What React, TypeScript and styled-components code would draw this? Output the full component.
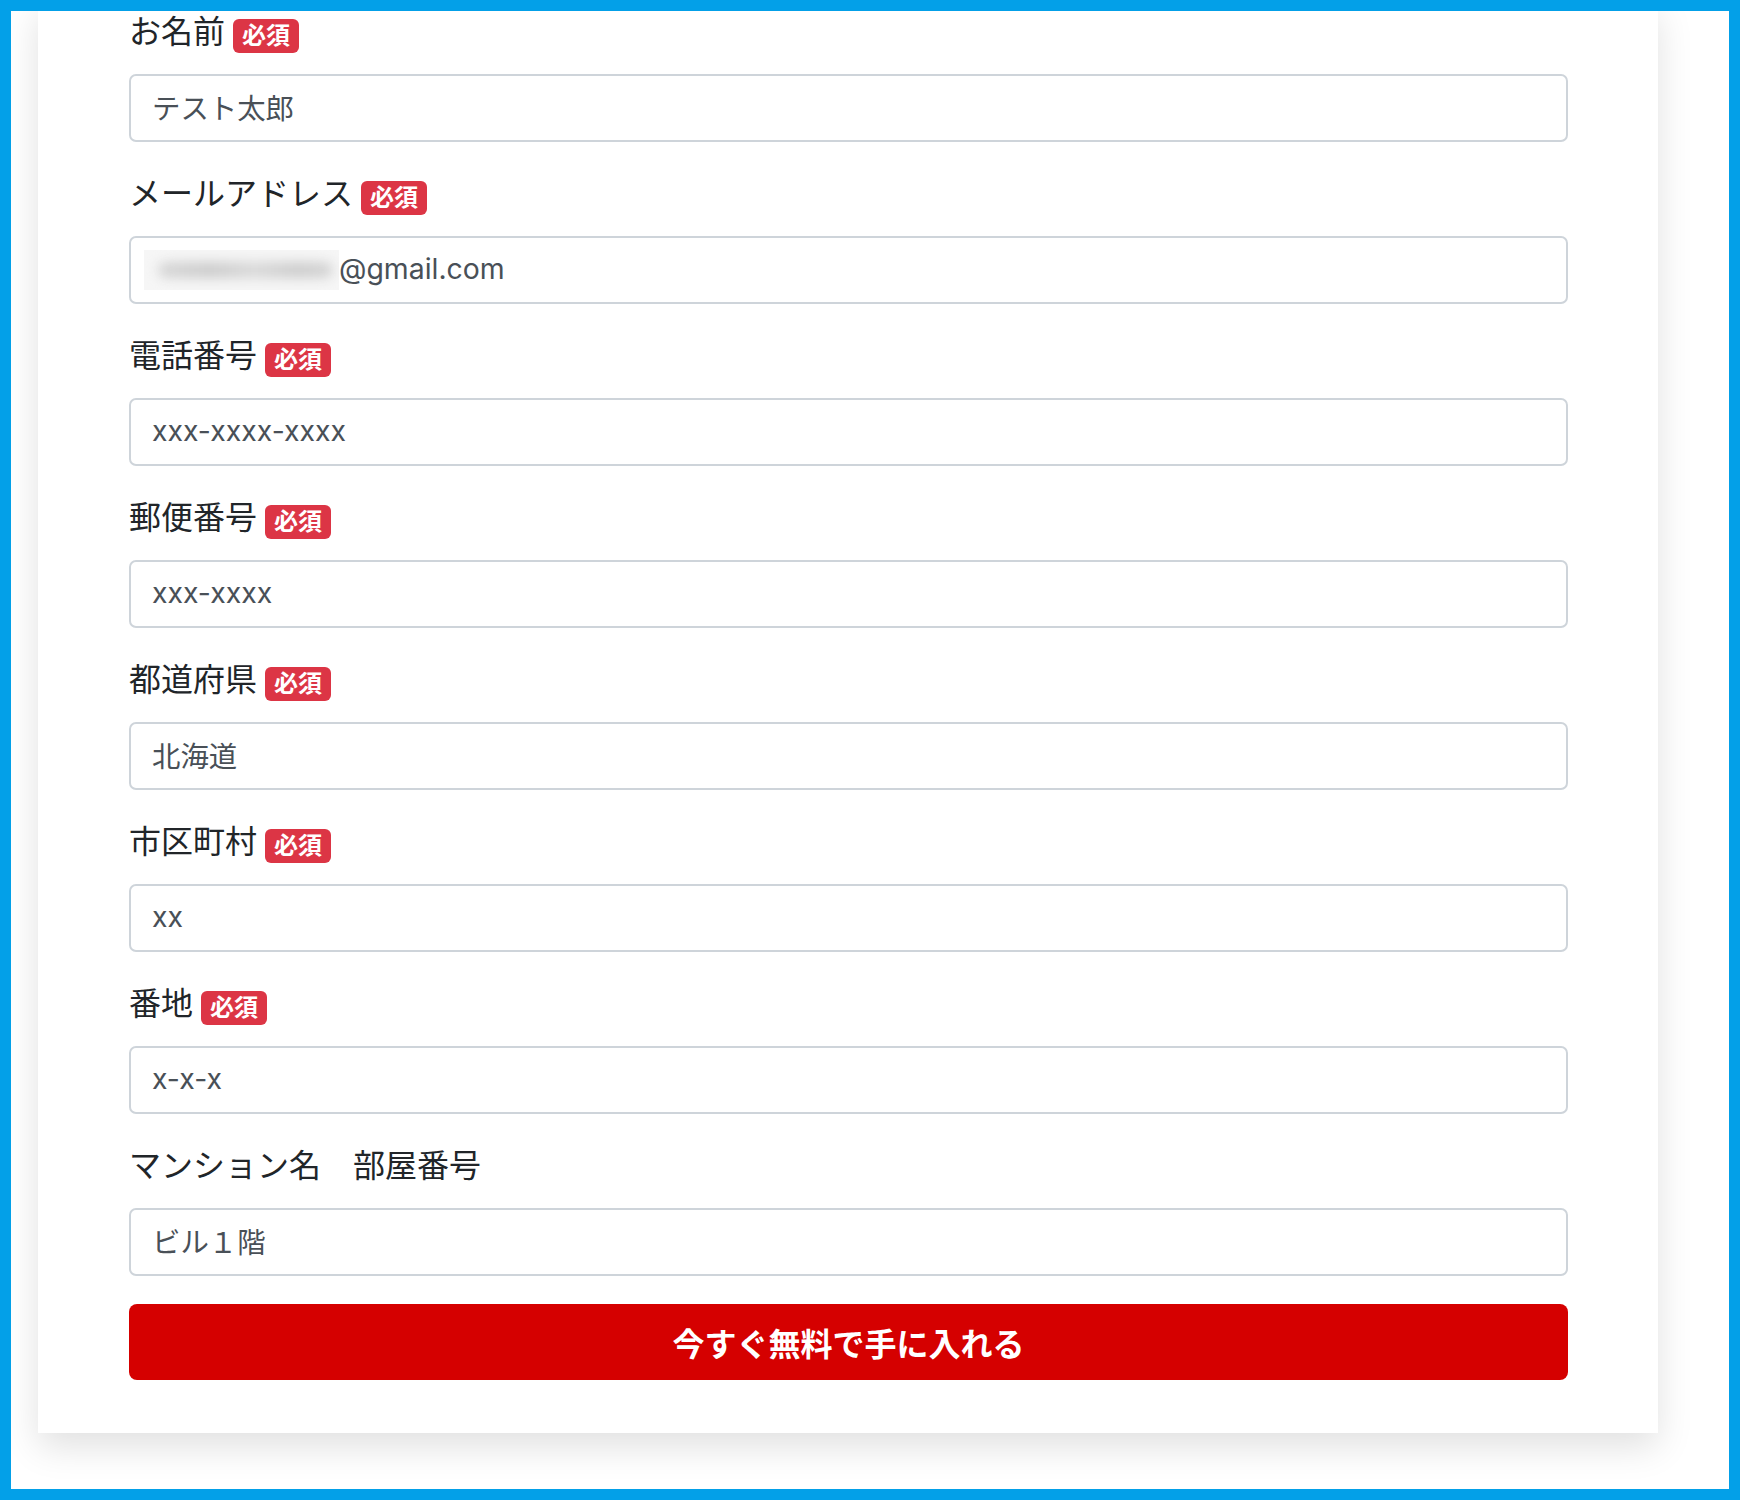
import React from 'react';
import styled, { createGlobalStyle } from 'styled-components';

const GlobalStyle = createGlobalStyle`
  html,
  body {
    margin: 0;
    padding: 0;
    background: #ffffff;
  }

  body {
    font-family: 'Liberation Sans', 'Noto Sans CJK JP', sans-serif;
    color: #212529;
    -webkit-font-smoothing: antialiased;
  }

  * {
    box-sizing: border-box;
  }
`;

const Frame = styled.div`
  position: fixed;
  inset: 0;
  border: 11px solid #03a0e8;
  pointer-events: none;
  z-index: 10;
`;

const Page = styled.div`
  padding: 0 0 60px 38px;
`;

const Card = styled.form`
  width: 1620px;
  background: #ffffff;
  padding: 8px 90px 53px 91px;
  box-shadow: 0 14px 34px rgba(0, 0, 0, 0.12);
`;

const FormGroup = styled.div`
  margin-bottom: 28px;
`;

const Label = styled.label`
  display: flex;
  align-items: center;
  height: 48px;
  margin-bottom: 18px;
  font-size: 32px;
  line-height: 48px;
  color: #212529;
`;

const Badge = styled.span`
  display: inline-block;
  margin: 8px 0 0 8px;
  padding: 5px 9px;
  border-radius: 6px;
  background: #dc3545;
  color: #ffffff;
  font-size: 24px;
  font-weight: 700;
  line-height: 1;
`;

const InputBox = styled.div`
  display: flex;
  align-items: center;
  height: 68px;
  padding: 0 21px 3px;
  border: 2px solid #ced4da;
  border-radius: 7px;
  background: #ffffff;
  color: #495057;
  font-family: 'Inter', 'Noto Sans CJK JP', sans-serif;
  font-size: 28.4px;
  white-space: pre;
`;

const Redacted = styled.span`
  position: relative;
  display: inline-block;
  width: 195px;
  height: 40px;
  margin: 3px 0 0 -8px;
  overflow: hidden;
  background: #f6f6f6;

  &::before {
    content: '';
    position: absolute;
    left: 14px;
    right: 6px;
    top: 12px;
    bottom: 12px;
    border-radius: 10px;
    background: linear-gradient(
      90deg,
      #d6d6d6 0%,
      #cbcbcb 30%,
      #d8d8d8 55%,
      #cccccc 80%,
      #d4d4d4 100%
    );
    filter: blur(6px);
  }
`;

const SubmitButton = styled.button`
  display: block;
  width: 100%;
  height: 76px;
  margin-top: 4px;
  border: none;
  border-radius: 8px;
  background: #d50000;
  color: #ffffff;
  font-family: 'Noto Sans CJK JP', sans-serif;
  font-size: 32px;
  font-weight: 700;
  letter-spacing: 0;
  cursor: pointer;
`;

interface FieldProps {
  label: string;
  required?: boolean;
  children: React.ReactNode;
}

const Field: React.FC<FieldProps> = ({ label, required = true, children }) => (
  <FormGroup>
    <Label>
      {label}
      {required && <Badge>必須</Badge>}
    </Label>
    <InputBox>{children}</InputBox>
  </FormGroup>
);

const App: React.FC = () => {
  return (
    <>
      <GlobalStyle />
      <Page>
        <Card onSubmit={(e) => e.preventDefault()}>
          <Field label="お名前">テスト太郎</Field>
          <Field label="メールアドレス">
            <Redacted />
            @gmail.com
          </Field>
          <Field label="電話番号">xxx-xxxx-xxxx</Field>
          <Field label="郵便番号">xxx-xxxx</Field>
          <Field label="都道府県">北海道</Field>
          <Field label="市区町村">xx</Field>
          <Field label="番地">x-x-x</Field>
          <Field label="マンション名　部屋番号" required={false}>
            ビル１階
          </Field>
          <SubmitButton type="submit">今すぐ無料で手に入れる</SubmitButton>
        </Card>
      </Page>
      <Frame />
    </>
  );
};

export default App;
